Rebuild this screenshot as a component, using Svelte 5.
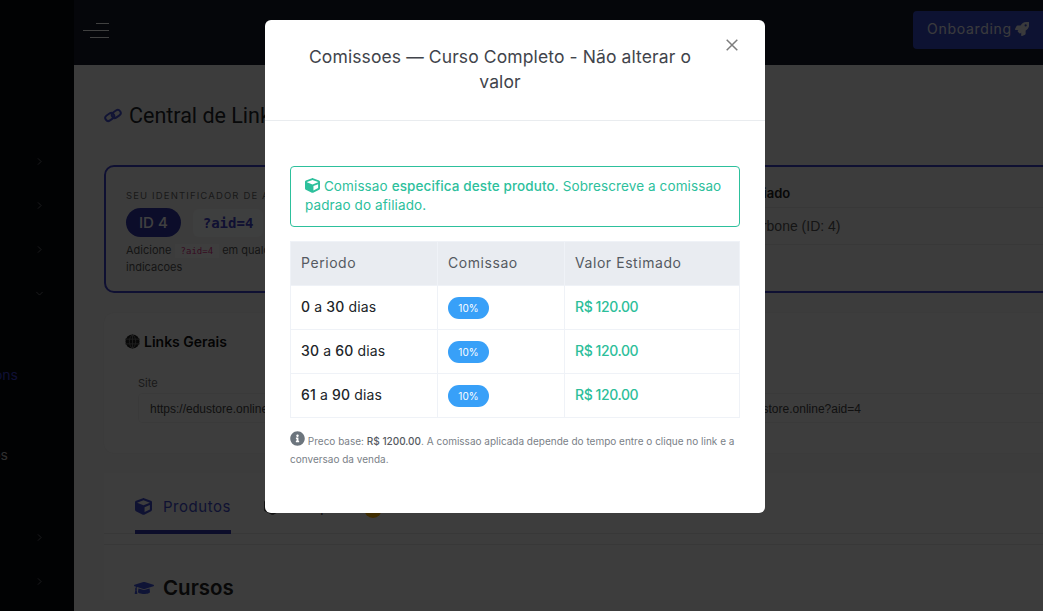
<script>
  const navRows = [0, 1, 2];
  const rows = [
    { from: 0, to: 30 },
    { from: 30, to: 60 },
    { from: 61, to: 90 }
  ];
  const cube = 'M239.1 6.3l-208 78c-18.7 7-31.1 25-31.1 45v225.1c0 18.2 10.3 34.8 26.5 42.9l208 104c13.5 6.8 29.4 6.8 42.9 0l208-104c16.3-8.1 26.5-24.8 26.5-42.9V129.3c0-20-12.4-37.9-31.1-44.9l-208-78C262 2.2 250 2.2 239.1 6.3zM256 68.4l192 72v1.1l-192 78-192-78v-1.1l192-72zm32 356V275.5l160-65v133.9l-160 80z';
</script>

<div class="page">
  <aside class="sidebar">
    <div class="nav-top">
      {#each navRows as _}
        <div class="nav-row"><svg class="chev" viewBox="0 0 8 12"><path d="M1.5 1l5 5-5 5" /></svg></div>
      {/each}
      <div class="nav-row"><svg class="chev down" viewBox="0 0 12 8"><path d="M1 1.5l5 5 5-5" /></svg></div>
    </div>
    <span class="clip active">Comissions</span>
    <span class="clip second">Afiliados</span>
    <div class="nav-bottom">
      {#each navRows as _}
        <div class="nav-row"><svg class="chev" viewBox="0 0 8 12"><path d="M1.5 1l5 5-5 5" /></svg></div>
      {/each}
    </div>
  </aside>

  <div class="main">
    <header class="topbar">
      <div class="burger"><i class="b1"></i><i class="b2"></i><i class="b3"></i></div>
      <button class="onboarding">
        <span>Onboarding</span>
        <svg viewBox="0 0 512 512" width="16" height="16"><path fill="currentColor" d="M505.12 19.09c-1.19-5.53-6.66-11-12.21-12.18C460.72 0 435.51 0 410.41 0 307.18 0 245.27 55.2 199.05 128H94.84c-16.35.02-35.56 11.88-42.89 26.48L2.52 253.3A28.4 28.4 0 0 0 0 264a24 24 0 0 0 24 24h103.81l-22.47 22.47c-11.37 11.36-13 32.26 0 45.25l50.9 50.9c11.16 11.19 32.16 13.16 45.28 0L224 384.16V488a24 24 0 0 0 24 24 28.56 28.56 0 0 0 10.71-2.52l98.73-49.39c14.63-7.3 26.5-26.5 26.5-42.86V312.8c72.6-46.31 128.04-108.41 128.04-211.1C512.08 76.5 512.08 51.3 505.12 19.09zM384.04 168A40 40 0 1 1 424.05 128a40.02 40.02 0 0 1-40.01 40z" /></svg>
      </button>
    </header>

    <main class="content">
      <h1 class="page-title">
        <svg viewBox="0 0 18 15" width="18" height="15">
          <g fill="none" stroke="#4650d0" stroke-width="2">
            <rect x="1" y="6" width="9.5" height="6" rx="3" transform="rotate(-35 5.7 9)" />
            <rect x="7.5" y="3" width="9.5" height="6" rx="3" transform="rotate(-35 12.2 6)" />
          </g>
        </svg>
        Central de Links
      </h1>

      <section class="id-card">
        <div class="id-left">
          <div class="eyebrow">SEU IDENTIFICADOR DE AFILIADO</div>
          <div class="id-pills"><span class="pill">ID 4</span><code class="aid">?aid=4</code></div>
          <p class="id-help">Adicione <code>?aid=4</code> em qualquer link da loja para rastrear suas indicacoes</p>
        </div>
        <div class="id-right">
          <div class="id-head">Afiliado</div>
          <div class="id-cell">Carbone (ID: 4)</div>
        </div>
      </section>

      <section class="links-card">
        <h2>
          <svg viewBox="0 0 16 16" width="15" height="15"><circle cx="8" cy="8" r="7.5" fill="#222" /><path d="M0 5.5h16M0 10.5h16M8 0v16M8 .5C3.5 4 3.5 12 8 15.5M8 .5c4.5 3.5 4.5 11.5 0 15" fill="none" stroke="#777" stroke-width="1" /></svg>
          Links Gerais
        </h2>
        <div class="fields">
          <div class="field"><span class="label">Site</span><div class="input">https://edustore.online</div></div>
          <div class="field right"><span class="label">Checkout</span><div class="input">https://edustore.online?aid=4</div></div>
        </div>
      </section>

      <section class="tabs-card">
        <div class="tabs-head">
          <div class="tabs">
            <span class="tab">
              <svg viewBox="0 0 512 512" width="17" height="17"><path fill="currentColor" d={cube} /></svg>
              Produtos
            </span>
            <span class="tab other">
              <svg viewBox="0 0 512 512" width="17" height="17"><path fill="currentColor" d={cube} /></svg>
              Cupons
            </span>
            <span class="tab-dot"></span>
          </div>
        </div>
        <h3>
          <svg viewBox="0 0 640 512" width="20" height="16"><path fill="#3f51d8" d="M622.34 153.2L343.4 67.5c-15.2-4.67-31.6-4.67-46.79 0L17.66 153.2c-23.54 7.23-23.54 38.36 0 45.59l48.63 14.94c-10.67 13.19-17.23 29.28-17.88 46.9C38.78 266.15 32 276.11 32 288c0 10.78 5.68 19.85 13.86 25.65L20.33 428.53C18.11 438.52 25.71 448 35.94 448h56.11c10.24 0 17.84-9.48 15.62-19.47L82.14 313.65C90.32 307.85 96 298.78 96 288c0-11.57-6.47-21.25-15.66-26.87.76-15.02 8.44-28.3 20.69-36.72L296.6 284.5c9.06 2.78 26.44 6.25 46.79 0l278.95-85.7c23.55-7.24 23.55-38.36 0-45.6zM352.79 315.09c-28.53 8.76-52.84 3.92-65.59 0l-145.02-44.55L128 384c0 35.35 85.96 64 192 64s192-28.65 192-64l-14.18-113.47-145.03 44.56z" /></svg>
          Cursos
        </h3>
      </section>
    </main>
  </div>

  <div class="overlay">
    <div class="modal">
      <div class="modal-header">
        <h5>Comissoes — Curso Completo - Não alterar o valor</h5>
        <button class="close" aria-label="Fechar">
          <svg viewBox="0 0 12 12" width="12" height="12"><path d="M.7.7l10.6 10.6M11.3.7L.7 11.3" /></svg>
        </button>
      </div>
      <div class="modal-body">
        <div class="alert">
          <svg viewBox="0 0 512 512" width="15" height="15"><path fill="currentColor" d={cube} /></svg>
          Comissao <strong>especifica deste produto</strong>. Sobrescreve a comissao padrao do afiliado.
        </div>
        <table>
          <thead>
            <tr><th class="c1">Periodo</th><th class="c2">Comissao</th><th>Valor Estimado</th></tr>
          </thead>
          <tbody>
            {#each rows as row}
              <tr>
                <td><strong>{row.from}</strong> a <strong>{row.to}</strong> dias</td>
                <td><span class="badge">10%</span></td>
                <td class="value">R$ 120.00</td>
              </tr>
            {/each}
          </tbody>
        </table>
        <p class="note">
          <svg viewBox="0 0 512 512" width="15" height="15"><path fill="#6c757d" d="M256 8C119 8 8 119.1 8 256c0 137 111 248 248 248s248-111 248-248C504 119.1 393 8 256 8zm0 110c23.2 0 42 18.8 42 42s-18.8 42-42 42-42-18.8-42-42 18.8-42 42-42zm56 254c0 6.6-5.4 12-12 12h-88c-6.6 0-12-5.4-12-12v-24c0-6.6 5.4-12 12-12h12v-64h-12c-6.6 0-12-5.4-12-12v-24c0-6.6 5.4-12 12-12h64c6.6 0 12 5.4 12 12v100h12c6.6 0 12 5.4 12 12v24z" /></svg>
          Preco base: <strong>R$ 1200.00</strong>. A comissao aplicada depende do tempo entre o clique no link e a conversao da venda.
        </p>
      </div>
    </div>
  </div>
</div>

<style>
  :global(body) {
    margin: 0;
    overflow: hidden;
    font-family: Inter, "Noto Sans", sans-serif;
  }

  .page {
    position: relative;
    display: flex;
    height: 611px;
    overflow: hidden;
    background: #f0f0f0;
  }

  .sidebar {
    position: relative;
    flex: 0 0 74px;
    background: #06080f;
    overflow: hidden;
  }

  .nav-top { padding-top: 139px; }
  .nav-row {
    height: 44px;
    display: flex;
    align-items: center;
    padding-left: 37px;
    box-sizing: border-box;
  }
  .nav-bottom { margin-top: 200px; }

  .chev { width: 5px; height: 9px; fill: none; stroke: #aaa; stroke-width: 1; }
  .chev.down { width: 9px; height: 5px; margin-left: -2px; }

  .clip {
    position: absolute;
    font-size: 14px;
    white-space: nowrap;
  }
  .clip.active { top: 366px; right: 56px; color: #3f40d0; }
  .clip.second { top: 446px; right: 66px; color: #bbb; }

  .main { flex: 1; min-width: 0; }

  .topbar {
    height: 65px;
    display: flex;
    align-items: flex-start;
    justify-content: space-between;
    padding: 11px 0 0 9px;
    box-sizing: border-box;
    background: #141828;
  }

  .burger { display: flex; flex-direction: column; align-items: flex-end; gap: 6px; width: 26px; margin-top: 12px; }
  .burger i { display: block; height: 1px; background: #fff; }
  .b1 { width: 13px; }
  .b2 { width: 26px; }
  .b3 { width: 19px; }

  .onboarding {
    display: flex;
    align-items: center;
    gap: 3px;
    height: 38px;
    width: 130px;
    padding: 0 14px 3px;
    border: 0;
    border-radius: 4px 0 0 4px;
    background: #3549c8;
    color: #e8e8f0;
    font: 400 14px Inter, sans-serif;
    letter-spacing: .05em;
  }

  .content {
    height: 546px;
    padding: 0 0 0 30px;
    box-sizing: border-box;
    background: #f0f0f0;
    overflow: hidden;
  }

  .page-title {
    display: flex;
    align-items: center;
    gap: 7px;
    height: 100px;
    margin: 0;
    font: 400 21.5px Roboto, sans-serif;
    color: #212529;
  }

  .id-card {
    display: flex;
    height: 128px;
    margin-right: -20px;
    border: 2px solid #3f40c8;
    border-radius: 10px;
    box-sizing: border-box;
  }
  .id-left { width: 636px; padding: 23px 20px 0; box-sizing: border-box; }
  .eyebrow { font-size: 9.5px; letter-spacing: .12em; color: #666; white-space: nowrap; }
  .id-pills { display: flex; gap: 12px; align-items: center; margin-top: 7px; }
  .pill { padding: 6px 13px; border-radius: 15px; background: #3036a8; color: #fff; font-size: 15px; font-weight: 500; line-height: 17px; }
  .aid { padding: 6px 10px; border-radius: 6px; background: #f8f9fa; color: #3f40c8; font: 700 14px "DejaVu Sans Mono", monospace; }
  .id-help { margin: 5px 0 0; width: 320px; font-size: 11px; line-height: 17px; color: #555; }
  .id-help code { padding: 2px 6px; background: #f6f6f8; color: #d63384; font: 9px "DejaVu Sans Mono", monospace; }
  .id-right { flex: 1; font-size: 13px; }
  .id-head { height: 41px; padding: 18px 0 0; box-sizing: border-box; border-bottom: 1px solid #ddd; font-weight: 600; color: #222; }
  .id-cell { height: 37px; padding: 10px 0 0 2px; box-sizing: border-box; border-bottom: 1px solid #ddd; font-family: "Liberation Sans", sans-serif; font-size: 14px; color: #555; }

  .links-card {
    height: 140px;
    margin-top: 20px;
    margin-right: -20px;
    padding: 20px 34px 0 21px;
    box-sizing: border-box;
    background: #f4f4f4;
    border-radius: 10px;
    box-shadow: 0 0 2px #ddd;
  }
  .links-card h2 {
    display: flex;
    align-items: center;
    gap: 4px;
    margin: 0;
    font-size: 14px;
    font-weight: 600;
    color: #111;
  }
  .fields { display: grid; grid-template-columns: 1fr 1fr; gap: 16px; margin: 26px 0 0 13px; }
  .label { display: block; font-size: 11px; color: #666; }
  .input {
    height: 30px;
    margin-top: 3px;
    padding: 8px 11px;
    box-sizing: border-box;
    border: 1px solid #e8e8e8;
    border-radius: 4px;
    font: 12px "Liberation Sans", sans-serif;
    color: #444;
    white-space: nowrap;
  }
  .field.right { margin-left: 103px; margin-right: -107px; }

  .tabs-card {
    margin-top: 20px;
    margin-right: -20px;
    padding: 0 30px;
    background: #f2f2f2;
  }
  .tabs-head { height: 72px; margin: 0 -30px; border-bottom: 1px solid #e0e0e0; box-sizing: border-box; }
  .tabs {
    display: flex;
    align-items: flex-start;
    height: 61px;
    padding: 23px 31px 0;
    box-sizing: border-box;
    border-bottom: 1px solid #ddd;
  }
  .tab {
    display: flex;
    gap: 11px;
    align-items: center;
    height: 38px;
    width: 96px;
    flex: none;
    padding-bottom: 14px;
    box-sizing: border-box;
    border-bottom: 4px solid #3036a8;
    color: #3f4ac8;
    font-size: 15px;
    letter-spacing: .035em;
    white-space: nowrap;
  }
  .tab.other {
    gap: 18px;
    margin-left: 33px;
    border-bottom-color: transparent;
    color: #444;
  }
  .tab-dot { width: 18px; height: 18px; flex: none; margin: 4px 0 0 4px; border-radius: 50%; background: #ffb300; }
  .tabs-card h3 {
    display: flex;
    align-items: center;
    gap: 9px;
    margin: 30px 0 0;
    font-size: 20.5px;
    font-weight: 600;
    color: #222;
  }

  .overlay {
    position: absolute;
    inset: 0;
    display: flex;
    justify-content: center;
    align-items: flex-start;
    padding-right: 13px;
    background: rgba(0, 0, 0, .75);
  }

  .modal {
    width: 500px;
    margin-top: 20px;
    border-radius: 6px;
    background: #fff;
  }

  .modal-header {
    position: relative;
    height: 101px;
    padding: 24px 70px 0 40px;
    box-sizing: border-box;
    border-bottom: 1px solid #e9ecef;
  }
  .modal-header h5 {
    margin: 0;
    font-size: 17.5px;
    font-weight: 400;
    line-height: 25px;
    letter-spacing: .006em;
    text-align: center;
    color: #41444b;
  }
  .close {
    position: absolute;
    top: 19px;
    right: 27px;
    padding: 0;
    border: 0;
    background: none;
    line-height: 0;
  }
  .close path { fill: none; stroke: #7d7d7d; stroke-width: 1.5; }

  .modal-body { padding: 45px 25px 0; height: 392px; box-sizing: border-box; }

  .alert {
    height: 61px;
    padding: 10px 14px;
    box-sizing: border-box;
    border: 1px solid #2dc09c;
    border-radius: 4px;
    font-size: 13.5px;
    line-height: 19px;
    letter-spacing: .008em;
    color: #2dc09c;
  }
  .alert strong { font-weight: 500; }
  .alert svg { vertical-align: -2px; }

  table {
    width: 450px;
    margin-top: 14px;
    border-collapse: collapse;
    table-layout: fixed;
    font-size: 14px;
  }
  th, td {
    height: 44px;
    padding: 0 10px 2px;
    border: 1px solid #eff2f7;
    text-align: left;
    box-sizing: border-box;
  }
  th {
    background: #e9ecf1;
    font-weight: 400;
    color: #555a61;
    letter-spacing: .04em;
  }
  .c1 { width: 147px; }
  .c2 { width: 127px; }
  td { color: #212529; letter-spacing: .01em; }
  td strong { font-weight: 500; }
  .badge {
    display: inline-block;
    width: 41px;
    height: 22px;
    line-height: 22px;
    text-align: center;
    border-radius: 11px;
    background: #38a0f8;
    color: #fff;
    font-size: 10px;
    vertical-align: -3px;
  }
  td.value { color: #2dbe9a; font-weight: 500; letter-spacing: -.03em; }

  .note {
    margin: 13px 0 0;
    font-size: 10px;
    line-height: 18px;
    color: #7a7f87;
  }
  .note strong { font-weight: 500; color: #555a61; }
  .note svg { vertical-align: -1px; }
</style>
